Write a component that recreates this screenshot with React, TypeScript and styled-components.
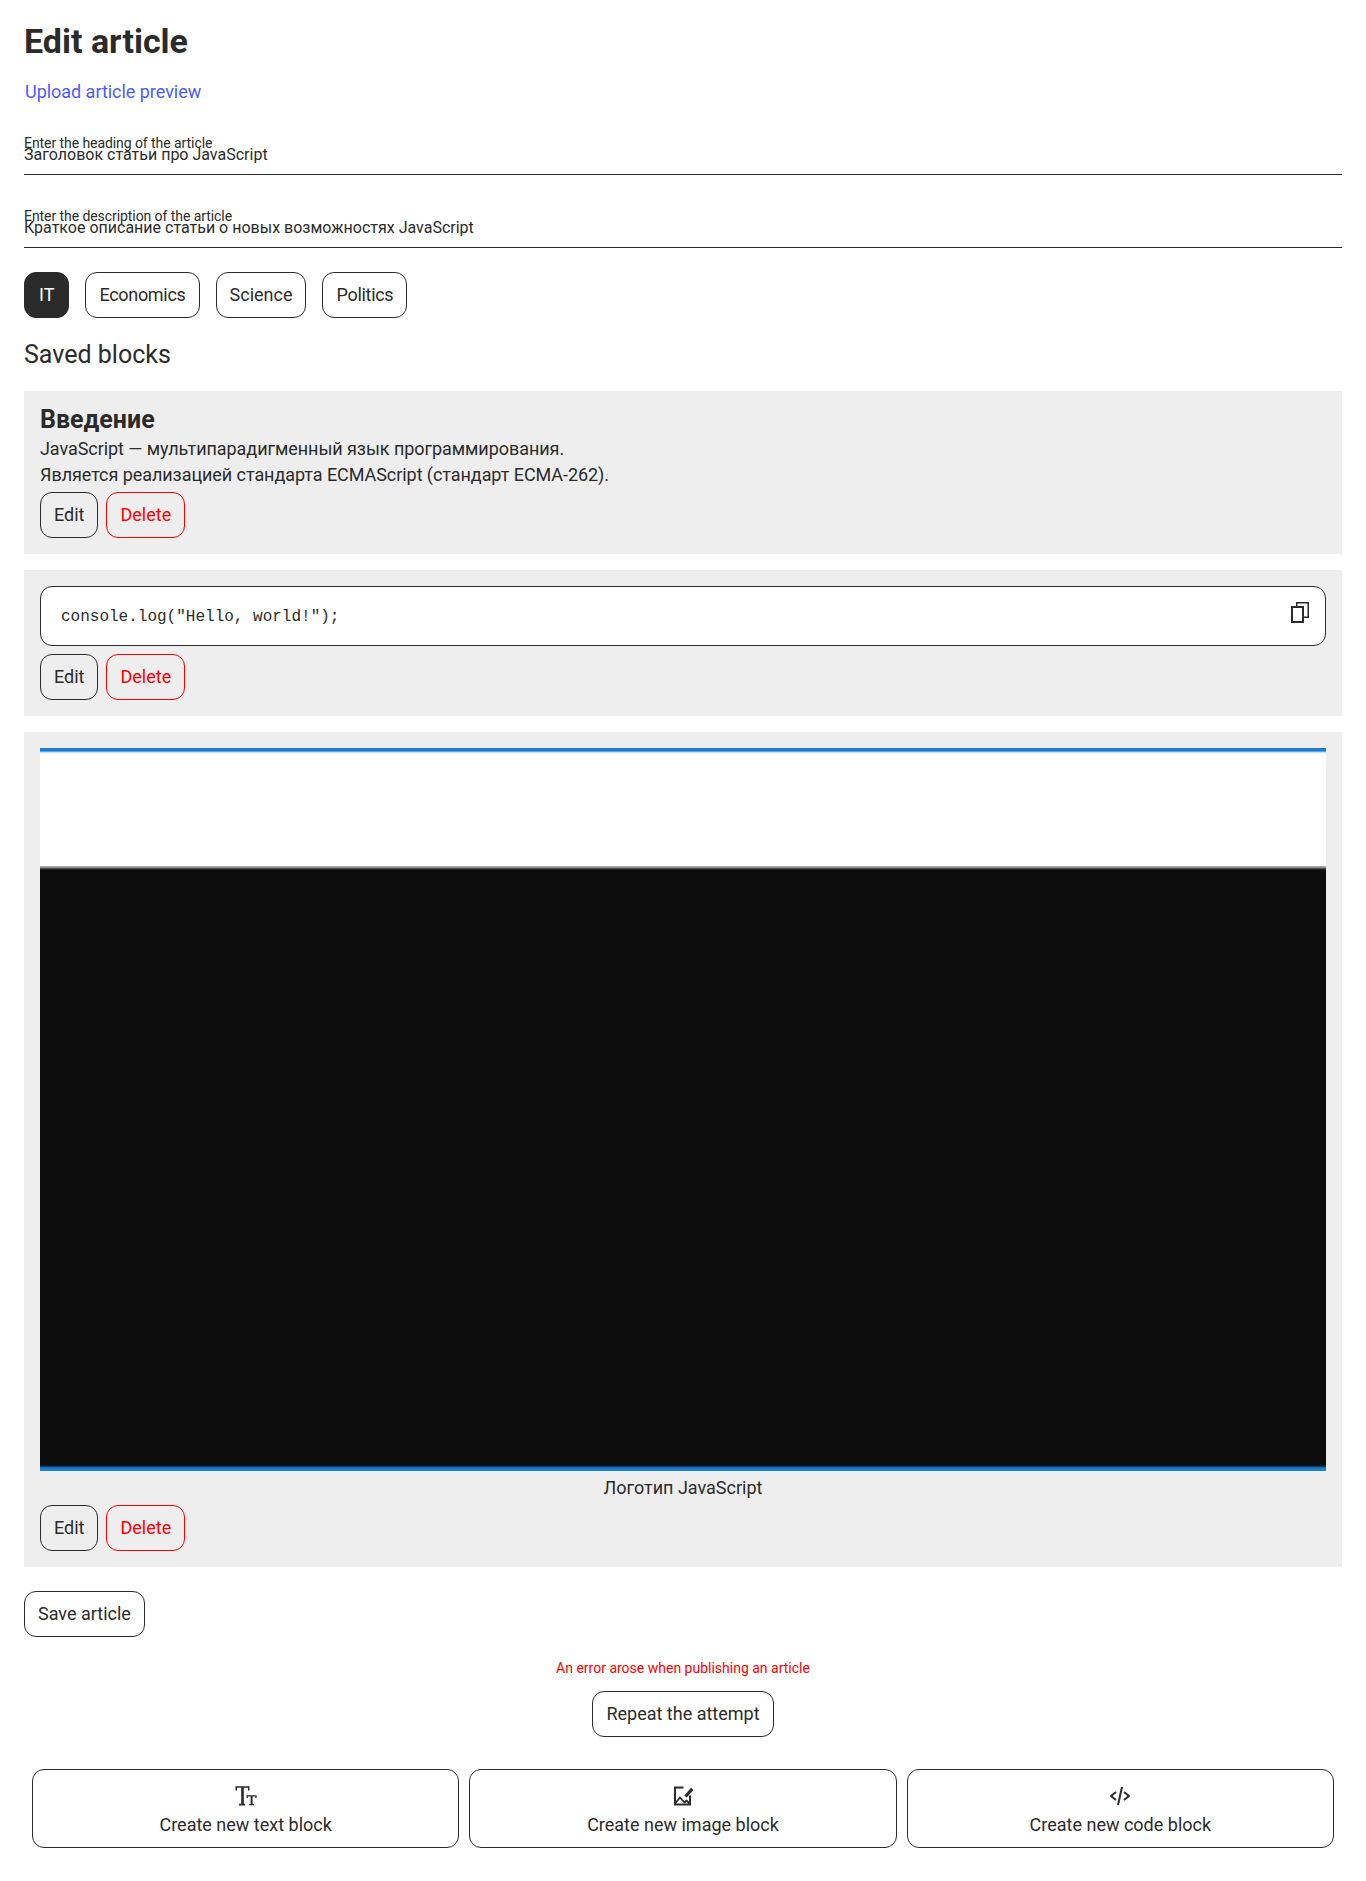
import styled, { createGlobalStyle } from "styled-components";
import { BiCodeAlt } from "react-icons/bi";

const GlobalStyle = createGlobalStyle`
    * {
        box-sizing: border-box;
    }

    body {
        margin: 0;
        background: #fff;
        color: #2b2b2b;
        font-family: Roboto, "Noto Sans", sans-serif;
    }
`;

const Page = styled.main`
    display: flex;
    flex-direction: column;
    align-items: flex-start;
    padding: 22px 24px 33px;
`;

const Title = styled.h1`
    margin: 0;
    font-size: 34px;
    line-height: 38px;
    font-weight: 700;
`;

const UploadLink = styled.a`
    margin: 21px 0 0 1px;
    font-size: 18px;
    line-height: 21px;
    letter-spacing: -0.03px;
    color: #4a5cff;
`;

const Fields = styled.div`
    display: flex;
    flex-direction: column;
    gap: 41px;
    width: 100%;
    margin-top: 41px;
`;

const Field = styled.label`
    position: relative;
    display: block;
    width: 100%;
`;

const FieldLabel = styled.span`
    position: absolute;
    top: -8px;
    left: 0;
    font-size: 14px;
    line-height: 16px;
    letter-spacing: -0.07px;
`;

const FieldInput = styled.input`
    display: block;
    width: 100%;
    height: 32px;
    padding: 0 0 8px;
    border: 0;
    border-bottom: 1px solid #2b2b2b;
    outline: none;
    background: transparent;
    color: #2b2b2b;
    font-family: inherit;
    font-size: 16px;
    line-height: 19px;
`;

const Tags = styled.div`
    display: flex;
    gap: 16px;
    margin-top: 24px;
`;

const Button = styled.button<{ $tone?: "dark" | "danger"; $tight?: boolean }>`
    height: 46px;
    padding: 0 ${({ $tone }) => ($tone === "dark" ? "14px" : "13px")} 2px;
    border: 1px solid ${({ $tone }) => ($tone === "danger" ? "#ff0000" : "#2b2b2b")};
    border-radius: 12px;
    background: ${({ $tone }) => ($tone === "dark" ? "#2b2b2b" : "transparent")};
    color: ${({ $tone }) =>
        $tone === "dark" ? "#fff" : $tone === "danger" ? "#ff0000" : "#2b2b2b"};
    font-family: inherit;
    font-size: 18px;
    line-height: 21px;
    letter-spacing: ${({ $tight }) => ($tight ? "-0.3px" : "0")};
    cursor: pointer;
`;

const SectionTitle = styled.h2`
    margin: 23px 0 0;
    font-size: 25px;
    line-height: 28px;
    font-weight: 400;
`;

const Blocks = styled.div`
    display: flex;
    flex-direction: column;
    gap: 16px;
    width: 100%;
    margin-top: 22px;
`;

const Block = styled.section`
    display: flex;
    flex-direction: column;
    padding: 16px;
    background: #eeeeee;
`;

const BlockHeading = styled.h3`
    margin: 0 0 4px;
    font-size: 25px;
    line-height: 25px;
    font-weight: 700;
`;

const BlockText = styled.p`
    margin: 0;
    font-size: 18px;
    line-height: 26px;
    letter-spacing: -0.06px;
`;

const BlockActions = styled.div<{ $offset: number }>`
    display: flex;
    gap: 8px;
    margin-top: ${({ $offset }) => $offset}px;
`;

const CodeBox = styled.div`
    position: relative;
    height: 60px;
    padding: 19px 20px;
    border: 1px solid #2b2b2b;
    border-radius: 12px;
    background: #fff;
`;

const Code = styled.code`
    font-family: "Liberation Mono", monospace;
    font-size: 16px;
    line-height: 18px;
`;

const CopyIcon = styled.svg`
    position: absolute;
    top: 15px;
    right: 16px;
`;

const Picture = styled.div`
    height: 723px;
    background: linear-gradient(
        to bottom,
        #1a7fd4 0,
        #1a7fd4 3px,
        #a8d0f0 4px,
        #e8f2fb 5px,
        #ffffff 6px,
        #ffffff 118px,
        #c0c0c0 118px,
        #777777 120px,
        #333333 121px,
        #0c0c0c 122px,
        #0c0c0c 717px,
        #133a5c 718.5px,
        #1a7fd4 720px,
        #1a7fd4 723px
    );
`;

const Caption = styled.figcaption`
    margin-top: 6px;
    text-align: center;
    font-size: 18px;
    line-height: 21px;
`;

const Figure = styled.figure`
    margin: 0;
`;

const SaveRow = styled.div`
    margin-top: 24px;
`;

const ErrorBox = styled.div`
    display: flex;
    flex-direction: column;
    align-items: center;
    gap: 15px;
    width: 100%;
    margin-top: 23px;
`;

const ErrorText = styled.p`
    margin: 0;
    color: #ff0000;
    font-size: 14px;
    line-height: 16px;
`;

const CreateRow = styled.div`
    display: grid;
    grid-template-columns: repeat(3, 1fr);
    gap: 10px;
    width: 100%;
    margin-top: 32px;
    padding: 0 8px;
`;

const CreateButton = styled.button`
    display: flex;
    flex-direction: column;
    align-items: center;
    justify-content: center;
    gap: 6px;
    height: 79px;
    padding-top: 2px;
    border: 1px solid #2b2b2b;
    border-radius: 12px;
    background: transparent;
    color: #2b2b2b;
    font-family: inherit;
    font-size: 18px;
    line-height: 21px;
    cursor: pointer;
`;

const BlockButtons = ({ offset }: { offset: number }) => (
    <BlockActions $offset={offset}>
        <Button>Edit</Button>
        <Button $tone="danger">Delete</Button>
    </BlockActions>
);

const TextSizeIcon = () => (
    <svg width="24" height="24" viewBox="0 0 24 24" fill="none" stroke="#2b2b2b">
        <path strokeWidth="1.6" d="M2.3 6.5V3h12.4v3.5M5 20.6h6.2" />
        <path strokeWidth="2.6" d="M8.5 3v17.6" />
        <path strokeWidth="1.3" d="M13.2 14v-2.2h8.8V14M15.2 20.6h4.8" />
        <path strokeWidth="2" d="M17.6 11.8v8.8" />
    </svg>
);

const ImageEditIcon = () => (
    <svg width="24" height="24" viewBox="0 0 24 24" fill="none" stroke="#2b2b2b">
        <path strokeWidth="2" d="M12.5 3.5H4v17h15v-9" />
        <path strokeWidth="1.8" d="M4 19.5l5-6 4.5 5 2-2 3.5 3.5" />
        <path strokeWidth="3.2" d="M14.5 12.5l6.8-7.6" />
    </svg>
);

export default function App() {
    return (
        <Page>
            <GlobalStyle />
            <Title>Edit article</Title>
            <UploadLink>Upload article preview</UploadLink>
            <Fields>
                <Field>
                    <FieldLabel>Enter the heading of the article</FieldLabel>
                    <FieldInput readOnly value="Заголовок статьи про JavaScript" />
                </Field>
                <Field>
                    <FieldLabel>Enter the description of the article</FieldLabel>
                    <FieldInput
                        readOnly
                        value="Краткое описание статьи о новых возможностях JavaScript"
                    />
                </Field>
            </Fields>
            <Tags>
                <Button $tone="dark">IT</Button>
                <Button $tight>Economics</Button>
                <Button>Science</Button>
                <Button $tight>Politics</Button>
            </Tags>
            <SectionTitle>Saved blocks</SectionTitle>
            <Blocks>
                <Block>
                    <BlockHeading>Введение</BlockHeading>
                    <BlockText>JavaScript — мультипарадигменный язык программирования.</BlockText>
                    <BlockText>Является реализацией стандарта ECMAScript (стандарт ECMA-262).</BlockText>
                    <BlockButtons offset={4} />
                </Block>
                <Block>
                    <CodeBox>
                        <Code>console.log("Hello, world!");</Code>
                        <CopyIcon width="20" height="23" viewBox="0 0 20 23" fill="none" stroke="#2b2b2b">
                            <path strokeWidth="1.5" d="M7.75 4V.75h11.5v14.5H15" />
                            <rect x="3" y="5" width="11" height="15" strokeWidth="2" />
                        </CopyIcon>
                    </CodeBox>
                    <BlockButtons offset={8} />
                </Block>
                <Block>
                    <Figure>
                        <Picture />
                        <Caption>Логотип JavaScript</Caption>
                    </Figure>
                    <BlockButtons offset={7} />
                </Block>
            </Blocks>
            <SaveRow>
                <Button>Save article</Button>
            </SaveRow>
            <ErrorBox>
                <ErrorText>An error arose when publishing an article</ErrorText>
                <Button>Repeat the attempt</Button>
            </ErrorBox>
            <CreateRow>
                <CreateButton>
                    <TextSizeIcon />
                    Create new text block
                </CreateButton>
                <CreateButton>
                    <ImageEditIcon />
                    Create new image block
                </CreateButton>
                <CreateButton>
                    <BiCodeAlt size={24} />
                    Create new code block
                </CreateButton>
            </CreateRow>
        </Page>
    );
}
